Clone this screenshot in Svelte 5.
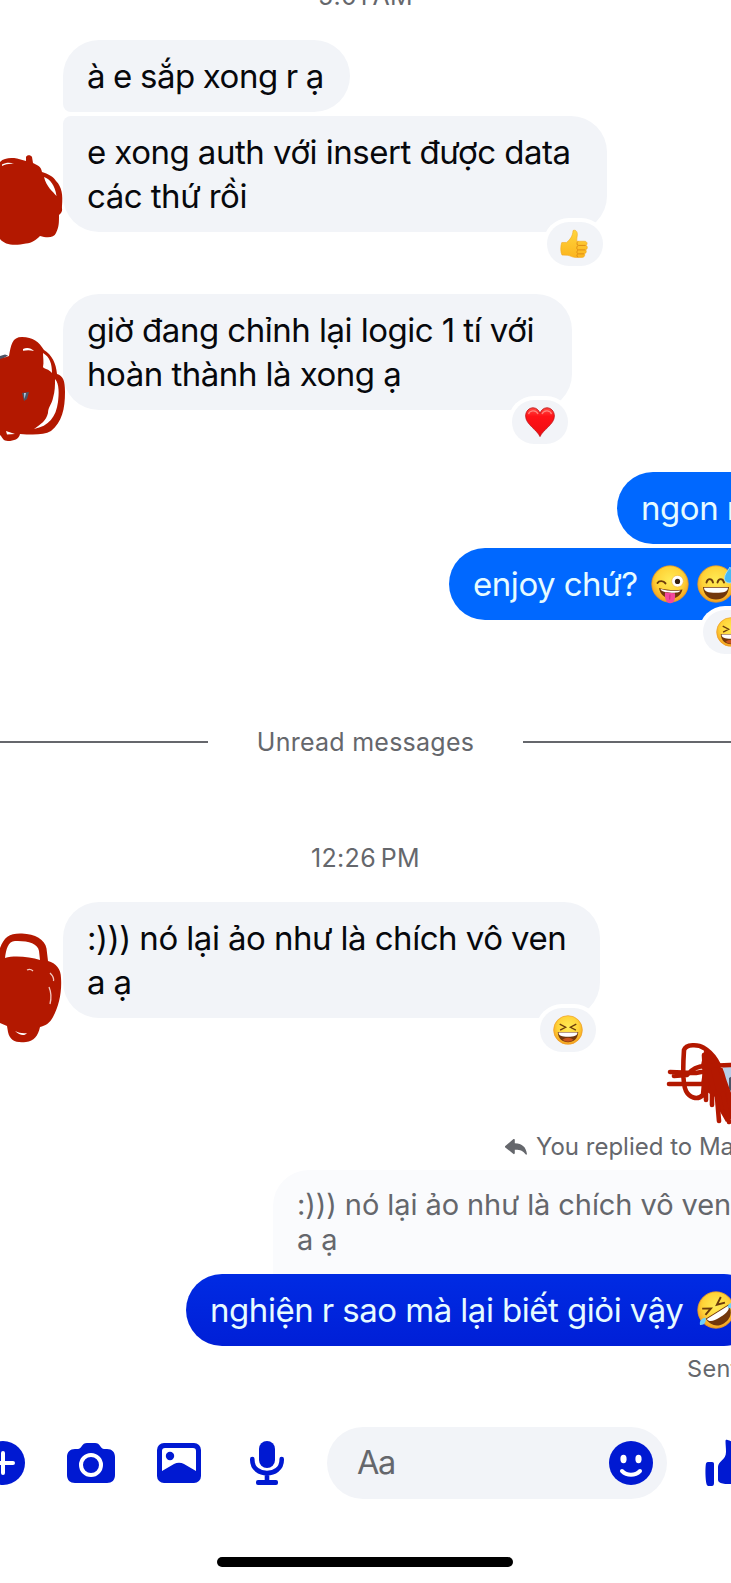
<script lang="ts">
  type Emoji = "thumb" | "heart" | "laugh" | "wink" | "sweat" | "rofl";

  interface Reply {
    lines: string[];
    kind: string;
    width: number;
    reaction?: Emoji;
    scribble?: number;
  }

  const morning: Reply[] = [
    { lines: ["à e sắp xong r ạ"], kind: "first", width: 287 },
    {
      lines: ["e xong auth với insert được data", "các thứ rồi"],
      kind: "last",
      width: 544,
      reaction: "thumb",
      scribble: 1,
    },
    {
      lines: ["giờ đang chỉnh lại logic 1 tí với", "hoàn thành là xong ạ"],
      kind: "single",
      width: 509,
      reaction: "heart",
      scribble: 2,
    },
  ];

  const noon: Reply[] = [
    {
      lines: [":))) nó lại ảo như là chích vô ven", "a ạ"],
      kind: "single",
      width: 537,
      reaction: "laugh",
      scribble: 3,
    },
  ];
</script>

{#snippet emoji(name: Emoji)}
  <svg class="emoji" viewBox="0 0 38 38" aria-hidden="true">
    {#if name === "thumb"}
      <path
        d="M16.500 2c3-1.500 5.500.8 5.500 4.800 0 3-1 5.200-.8 8.700h10c3.200 0 4.200 3.800 1.800 5.200 2.400 1.400 2 4.800-.4 5.700 1.400 1.800.6 4.300-1.500 5 .8 2.600-.6 4.600-3.300 4.600h-8.300c-4.200 0-5.800-2-9.500-2.600L2.500 33C.5 29 .5 22 2.200 17.200l6.300-.2c3.700-3.500 7.500-7 8-15z"
        fill="url(#hand)"
        stroke="#f0a51b"
        stroke-width="0.7"
      />
      <path
        d="M32.500 20.800h-9.200c-2.200 0-2.400-3.600-.5-5M32 26.500h-8.500c-2.400 0-3.200-4-.6-5.500M30.500 31.500h-7c-2.300 0-2.900-3.500-.5-4.900M23 35.500c-2-.5-2-2.800-.3-4"
        fill="none"
        stroke="#d98613"
        stroke-width="1.100"
      />
    {:else if name === "heart"}
      <path
        d="M19 37.500C15.500 29 .8 22 .8 11.500.8 5 5.500 1 10.200 1c4.300 0 7.300 3 8.800 7 1.500-4 4.500-7 8.800-7 4.700 0 9.400 4 9.400 10.500C37.200 22 22.500 29 19 37.500z"
        fill="url(#heart)"
        stroke="#b90e12"
        stroke-width="1"
      />
      <path d="M4.500 9c1-4 9-6.500 12 0M21.500 9c3-6.500 11-4 12 0" fill="none" stroke="#ff9a91" stroke-width="1.600" opacity=".8" />
    {:else}
      <circle cx="19" cy="19" r="18.200" fill="url(#face)" stroke="#ee9b20" stroke-width=".8" />
      {#if name === "laugh"}
        <path d="M8.500 11.500l7.500 4-7 3.600M29.500 11.500l-7.500 4 7 3.600" fill="none" stroke="#6c3b0c" stroke-width="1.700" />
        <path d="M6 21.500h26c-.5 8.500-6 13-13 13S6.500 30 6 21.500z" fill="#72370b" />
        <path d="M7 22.300h24c0 4-4 5.400-12 5.400S7 26.300 7 22.300z" fill="#fff" />
        <path d="M12 31.500c4-3.500 10-3.500 14 0-4 3.200-10 3.200-14 0z" fill="#c9541c" />
      {:else if name === "wink"}
        <path d="M6.500 18c1.500-2.500 6-2.600 8 .4" fill="none" stroke="#6c3b0c" stroke-width="1.900" stroke-linecap="round" />
        <circle cx="26.500" cy="16.200" r="5.800" fill="#fff" stroke="#f0b441" stroke-width=".6" />
        <circle cx="26.500" cy="16.400" r="2.600" fill="#38220f" />
        <path d="M8 23c7 2 16 2.600 23.500 1.500-1.500 6-6 9-11.500 9-6.500 0-11-4.500-12-10.500z" fill="#72370b" />
        <path d="M9.500 24c6 1.800 14 2.300 20 1.500-1 1.800-3 2.300-9 2.200-6-.1-10-1-11-3.700z" fill="#fff" />
        <path d="M14 27.500l10 .8c.6 6-1 10.200-5 9.900-4-.3-5.500-4.700-5-10.700z" fill="#f4489d" />
        <path d="M19 29.500l-.3 5" stroke="#cf2477" stroke-width="1" />
      {:else if name === "sweat"}
        <path d="M9.500 17.500c1-4.500 5.500-4.500 6.500 0M20.500 17.500c1-4.500 5.500-4.500 6.500 0" fill="none" stroke="#6c3b0c" stroke-width="1.900" stroke-linecap="round" />
        <path d="M6 22h26c-.5 8-6 12.500-13 12.500S6.500 30 6 22z" fill="#72370b" />
        <path d="M7 22.800h24c0 3.700-4 5-12 5s-12-1.300-12-5z" fill="#fff" />
        <path d="M33 2c-3 5-5.500 7.500-5.500 11.500 0 3 2.300 4.500 5.200 4.500 3 0 5.300-1.800 5.300-5z" fill="#45b8f5" stroke="#a9e3ff" stroke-width=".8" />
      {:else}
        <g transform="rotate(-32 19 19)">
          <path d="M8 10.500l7.500 4.500-8 2.500M30 10.500L22.500 15l8 2.500" fill="none" stroke="#6c3b0c" stroke-width="1.900" />
          <path d="M5.500 21h27c-.5 9-6 13.500-13.500 13.500S6 30 5.500 21z" fill="#72370b" />
          <path d="M6.500 21.800h25c0 4-4.500 5.500-12.500 5.500S6.500 25.800 6.500 21.800z" fill="#fff" />
        </g>
        <path d="M3 34c-.8-3.500 1-6.500 5.500-7.500 1 4-1 8-5.500 7.500z" fill="#6fd0fa" />
        <path d="M38 12c-4-1-6.500.5-7.500 4 3 2.500 6.500 1 7.500-1z" fill="#6fd0fa" />
      {/if}
    {/if}
  </svg>
{/snippet}

{#snippet scribble(index: number)}
  {#if index === 1}
    <svg class="scribble s1" viewBox="0 0 70 100" aria-hidden="true">
      <path d="M0 12C4 8 10 7.500 17 8.500L26 11 26 7c1-2.500 5-2 6 0l1 6c4 2 8 3 9 9 6 2 11 4 14 9 6 6 7 14 6 25-.3 3 1 4-1 7l-2 2c0 8 0 12-3 18-2 5-9 5-16 3-4 4-8 7-14 7.500C14 96 5 95 0 89z" />
      <path class="gap" d="M44 27c6 2 11 8 12.500 19-4-5-10-9-12.500-19zM2 14.500c4-2 8-2.500 12-.5-4-.5-8 0-12 2z" />
    </svg>
  {:else if index === 2}
    <svg class="scribble s2" viewBox="0 0 70 115" aria-hidden="true">
      <path class="photo" d="M0 26l5-1.500 3 1-8 5z" />
      <path d="M0 29l9-3C11 15 12 7 22 7c11 0 17 5 22 13 8 5 12 13 13 24 6 2 8 6 8 18 0 17-3 30-14 39-7 4-17 4-31 3-1 5-6 7-12 7-5 0-5-3-8-6z" />
      <path class="gap" d="M23 19c4-2 8-1 11 2-4-1-7-1-11-.2zM43 23c7 4 9 11 9 20-3-4-8-4-9-6 1-5 0-9 0-14zM55 49c4.500 5 4 15 3 23-2 15-9 24-24 27 7-5 12-8 14-16 0-6 4-9 5-15 2-7 2-12 2-19zM6 101l9 3-8 .5z" />
      <path class="photo" d="M22 63l7-1-2 7-3 2z" />
      <path class="photo-sky" d="M24 63l2 0-1.500 6z" />
    </svg>
  {:else}
    <svg class="scribble s3" viewBox="0 0 70 115" aria-hidden="true">
      <path d="M0 31V18C4 7 10 3 22 3.500c13 .5 23 6 24.500 15L48 31c8 2 13 8 13 17 1 14-2 28-8 39-3 6-8 9-13 10-2 9-6 14-14 15-10 1-16-1-18-10l-1-6-7-3z" />
      <path class="gap" d="M5 28C6 20 8 11 15 11c12-.5 23 2 24 10l1 9C30 27 15 25 5 28zM15 101c4 2 8 2.500 12 2-2 3-7 3-12-2z" />
      <path class="thin" d="M50 43c3 3 4 6 3.500 8M49 57c3 7 2 13 1 17M27 40c2-1 4-1 6 1" />
    </svg>
  {/if}
{/snippet}

{#snippet incoming(reply: Reply)}
  <div class="row {reply.kind}">
    <div class="bubble in" style="width: {reply.width}px">
      {#each reply.lines as line}
        <p>{line}</p>
      {/each}
      {#if reply.reaction}
        <span class="reaction">{@render emoji(reply.reaction)}</span>
      {/if}
    </div>
    {#if reply.scribble}
      {@render scribble(reply.scribble)}
    {/if}
  </div>
{/snippet}

<svg class="defs" width="0" height="0" aria-hidden="true">
  <defs>
    <radialGradient id="face" cx="50%" cy="40%" r="62%">
      <stop offset="0" stop-color="#ffeb55" />
      <stop offset="0.6" stop-color="#ffd338" />
      <stop offset="1" stop-color="#f39a1d" />
    </radialGradient>
    <linearGradient id="hand" x1="0" y1="0" x2="0" y2="1">
      <stop offset="0" stop-color="#ffd53e" />
      <stop offset="1" stop-color="#fcb51e" />
    </linearGradient>
    <linearGradient id="heart" x1="0" y1="0" x2="0" y2="1">
      <stop offset="0" stop-color="#ff4a43" />
      <stop offset="0.3" stop-color="#ff1217" />
      <stop offset="1" stop-color="#ee0d10" />
    </linearGradient>
  </defs>
</svg>

<main class="chat">
  <div class="time top">5:01&#8239;AM</div>

  {#each morning as reply}
    {@render incoming(reply)}
  {/each}

  <div class="bubble out ngon">ngon r</div>
  <div class="bubble out enjoy">
    <span>enjoy chứ?</span>
    {@render emoji("wink")}
    {@render emoji("sweat")}
    <span class="reaction">{@render emoji("laugh")}</span>
  </div>

  <div class="unread"><span>Unread messages</span></div>

  <div class="time noon">12:26&#8239;PM</div>

  {#each noon as reply}
    {@render incoming(reply)}
  {/each}

  <div class="reply-head">
    <svg class="scribble s4" viewBox="0 0 71 90" aria-hidden="true">
      <path class="photo-sky" d="M62 28h9v30h-6z" />
      <path class="photo" d="M68 39l3-2v16l-3-3z" />
      <path d="M43 12c7 0 13 7 17 17l7 20 4 10v20l-6 4-8-14-3-11-8-5-6-8 2-13-2-6z" />
      <path
        class="line"
        d="M42 56c-6 6-14 2-17-4-4-8-3-26-2-41 2-6 14-6 20-2 12 7 17 20 20 32l5 14 1 12M43 16l1 18-2 22M9 33l26 1 10-2M13 37l13-1c5-6 10-9 20-9l23-1M8 45h38M45 37v24M51 50v16M56 58l2 24M62 55l6 28M46 24l7 28"
      />
    </svg>
    <svg class="arrow" viewBox="0 0 22 16" aria-hidden="true">
      <path d="M0 7.300L8.200.3c.8-.7 1.600-.2 1.600.7v3.200c7.600.4 11.200 3.800 12.100 10.600.1 1-.8 1.300-1.400.5-2.200-3.200-5.200-4.600-10.700-4.500v3.300c0 1-.8 1.400-1.600.7L0 8.200z" />
    </svg>
    <span>You replied to Ma</span>
  </div>

  <div class="quote">
    <p>:))) nó lại ảo như là chích vô ven</p>
    <p>a ạ</p>
  </div>
  <div class="bubble out nghien">
    <span>nghiện r sao mà lại biết giỏi vậy</span>
    {@render emoji("rofl")}
  </div>
  <div class="status">Sent</div>

  <footer class="composer">
    <svg class="plus" viewBox="0 0 44 44" aria-label="More">
      <circle cx="22" cy="22" r="22" />
      <path class="cut" d="M22 12v20M12 22h20" />
    </svg>
    <svg class="camera" viewBox="0 0 48 40" aria-label="Camera">
      <path d="M8 6h3c1.500 0 2.500-1 3.500-2.500C16 1 17.500 0 20 0h8c2.500 0 4 1 5.500 3.500C34.500 5 35.500 6 37 6h3c5 0 8 3 8 8v18c0 5-3 8-8 8H8c-5 0-8-3-8-8V14c0-5 3-8 8-8z" />
      <circle class="ring" cx="24" cy="22" r="10" />
    </svg>
    <svg class="picture" viewBox="0 0 44 40" aria-label="Photos">
      <rect width="44" height="40" rx="7" />
      <path class="hole" d="M8 5h28a3 3 0 0 1 3 3v20l-12-7c-3-1.700-7-1.700-10 0L5 28V8a3 3 0 0 1 3-3z" />
      <circle cx="13" cy="13" r="4.200" />
    </svg>
    <svg class="mic" viewBox="0 0 34 44" aria-label="Voice">
      <rect x="9" width="16" height="27" rx="8" />
      <path class="stroke" d="M2.300 18v1c0 17.500 29.400 17.500 29.400 0v-1M17 32v9" />
      <rect x="6" y="39" width="22" height="5" rx="2" />
    </svg>
    <div class="field">
      <span>Aa</span>
      <svg class="smile" viewBox="0 0 44 44" aria-label="Emoji">
        <circle cx="22" cy="22" r="22" />
        <ellipse class="hole" cx="14.500" cy="18" rx="3.100" ry="4.200" />
        <ellipse class="hole" cx="29.500" cy="18" rx="3.100" ry="4.200" />
        <path class="cut" d="M13 30c5 5 13 5 18 0" />
      </svg>
    </div>
    <svg class="like" viewBox="0 0 46 48" aria-label="Like">
      <path d="M3 23h4c1.500 0 2 .8 2 2v19c0 2-.7 3-2 3H4c-1.500 0-2-.5-2.500-2C.3 40 .2 30 .8 25.500 1 24 1.500 23 3 23z" />
      <path d="M20.500 2c0-1 .8-1.500 2-1 6 1.500 8 5 7 11l-1 6h11c5 0 7 5 4 9 2 3 1 7-2 8 0 5-2 10-8 10H23c-4 0-7-.5-9-2-1-.8-1-2-1-3V28c0-6 8-7 8-15 0-4-.5-8-.5-11z" />
    </svg>
  </footer>
  <div class="home"></div>
</main>

<style>
  :global(body) {
    margin: 0;
    background: #fff;
    overflow: hidden;
  }

  .defs {
    position: absolute;
  }

  .chat {
    width: 731px;
    height: 1583px;
    overflow: hidden;
    display: flex;
    flex-direction: column;
    align-items: flex-start;
    font-family: Inter, Roboto, sans-serif;
    color: #07080c;
    white-space: nowrap;
  }

  p {
    margin: 0;
  }

  .time {
    align-self: center;
    flex-shrink: 0;
    font-size: 25px;
    line-height: 32px;
    letter-spacing: 0.3px;
    color: #65676c;
  }

  .top {
    margin: -20px 0 28px;
  }

  .row {
    position: relative;
    width: 100%;
    padding-left: 63px;
    box-sizing: border-box;
  }

  .bubble {
    position: relative;
    flex-shrink: 0;
    box-sizing: border-box;
    padding: 14px 24px;
    border-radius: 36px;
    font-size: 33px;
    line-height: 44px;
    letter-spacing: -0.45px;
    word-spacing: -0.3px;
  }

  .in {
    background: #f2f4f8;
  }

  .first .bubble {
    border-bottom-left-radius: 8px;
    word-spacing: -0.8px;
  }

  .last {
    margin-top: 4px;
  }

  .last .bubble {
    border-top-left-radius: 8px;
  }

  .last + .single {
    margin-top: 62px;
  }

  .reaction {
    position: absolute;
    right: 4px;
    bottom: -34px;
    width: 56px;
    height: 44px;
    border-radius: 22px;
    background: #f2f4f8;
    box-shadow: 0 0 0 4px #fff;
    display: flex;
    align-items: center;
    justify-content: center;
  }

  .emoji {
    flex-shrink: 0;
    width: 38px;
    height: 38px;
    overflow: visible;
  }

  .reaction .emoji {
    width: 30px;
    height: 30px;
  }

  .scribble {
    position: absolute;
    left: 0;
    width: 70px;
    fill: #b31800;
  }

  .s1 {
    top: 34px;
    height: 100px;
  }

  .s2 {
    top: 36px;
    height: 115px;
  }

  .s3 {
    top: 28px;
    height: 115px;
  }

  .s4 {
    left: 661px;
    top: -92px;
    width: 71px;
    height: 90px;
  }

  .scribble .gap {
    fill: #fff;
  }

  .scribble .thin {
    fill: none;
    stroke: #f3c9c0;
    stroke-width: 1.3;
  }

  .scribble .photo {
    fill: #4c5365;
  }

  .scribble .photo-sky {
    fill: #b8cfe8;
  }

  .scribble .line {
    fill: none;
    stroke: #b31800;
    stroke-width: 4.6;
    stroke-linecap: round;
    stroke-linejoin: round;
  }

  .out {
    display: flex;
    align-items: center;
    background: #0068ff;
    color: #e6fbff;
  }

  .ngon {
    margin: 62px 0 0 617px;
    width: 160px;
  }

  .enjoy {
    margin: 4px 0 0 449px;
    width: 324px;
    gap: 8px;
  }

  .enjoy span:first-child {
    margin-right: 5px;
  }

  .enjoy .reaction {
    right: 14px;
  }

  .unread {
    width: 100%;
    margin-top: 106px;
    flex-shrink: 0;
    display: flex;
    align-items: center;
    gap: 49px;
    font-size: 25px;
    line-height: 32px;
    letter-spacing: 0.25px;
    color: #65676c;
  }

  .unread::before,
  .unread::after {
    content: "";
    flex: 1;
    height: 2px;
    background: #65676c;
  }

  .noon {
    margin: 84px 0 28px;
  }

  .reply-head {
    position: relative;
    width: 100%;
    flex-shrink: 0;
    box-sizing: border-box;
    margin-top: 113px;
    padding-left: 505px;
    display: flex;
    align-items: center;
    gap: 9px;
    font-size: 24px;
    line-height: 32px;
    color: #65676c;
  }

  .arrow {
    flex-shrink: 0;
    width: 22px;
    height: 16px;
    fill: #65676c;
  }

  .quote {
    flex-shrink: 0;
    box-sizing: border-box;
    width: 480px;
    height: 104px;
    margin: 7px 0 0 273px;
    padding: 17px 24px 0;
    border-radius: 36px 0 0 0;
    background: #fafbfd;
    font-size: 29px;
    line-height: 35px;
    letter-spacing: -0.08px;
    color: #65676c;
  }

  .nghien {
    margin-left: 186px;
    width: 574px;
    gap: 14px;
    background: linear-gradient(#002be3, #001fd7);
  }

  .status {
    margin: 8px 0 0 687px;
    flex-shrink: 0;
    font-size: 23.5px;
    line-height: 30px;
    letter-spacing: 0.3px;
    color: #65676c;
  }

  .composer {
    display: flex;
    align-items: center;
    flex-shrink: 0;
    margin: 43px 0 0 -19px;
    height: 72px;
  }

  .composer svg {
    flex-shrink: 0;
    fill: #0019d2;
  }

  .composer .hole {
    fill: #fff;
  }

  .composer .cut {
    fill: none;
    stroke: #fff;
    stroke-width: 4;
    stroke-linecap: round;
  }

  .plus,
  .smile {
    width: 44px;
    height: 44px;
  }

  .camera {
    width: 48px;
    height: 40px;
    margin-left: 42px;
  }

  .camera .ring {
    stroke: #fff;
    stroke-width: 4;
  }

  .picture {
    width: 44px;
    height: 40px;
    margin-left: 42px;
  }

  .mic {
    width: 34px;
    height: 44px;
    margin-left: 49px;
  }

  .mic .stroke {
    fill: none;
    stroke: #0019d2;
    stroke-width: 4.6;
    stroke-linecap: round;
  }

  .field {
    display: flex;
    align-items: center;
    justify-content: space-between;
    flex-shrink: 0;
    box-sizing: border-box;
    width: 340px;
    height: 72px;
    margin-left: 43px;
    padding: 0 14px 0 30px;
    border-radius: 36px;
    background: #f2f4f8;
    font-size: 32.5px;
    letter-spacing: -1.4px;
    color: #65676c;
  }

  .field span {
    padding-bottom: 2px;
  }

  .like {
    width: 46px;
    height: 48px;
    margin-left: 38px;
  }

  .home {
    flex-shrink: 0;
    width: 296px;
    height: 10px;
    margin: 58px 0 0 217px;
    border-radius: 5px;
    background: #000;
  }
</style>
